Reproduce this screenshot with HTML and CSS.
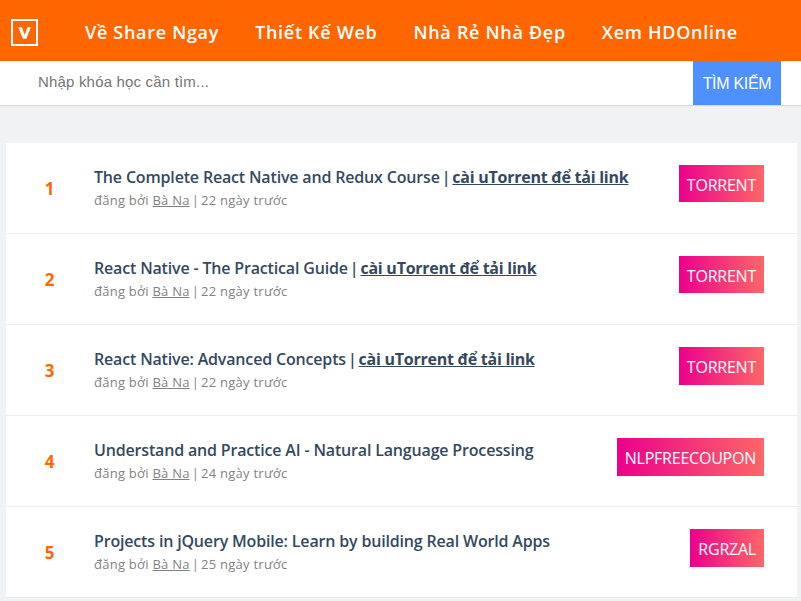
FILE: index.html
```
<!DOCTYPE html>
<html lang="vi">
<head>
    <meta charset="UTF-8">
    <meta name="viewport" content="width=device-width, initial-scale=1.0">
    <title>Share Ngay</title>
    <link rel="stylesheet" href="styles.css">
</head>
<body>
    <header class="header">
        <a class="logo" href="#">
            <svg width="27" height="27" viewBox="0 0 27 27">
                <rect x="1" y="1" width="25" height="25" fill="none" stroke="#fff" stroke-width="2"/>
                <path d="M7.2 8.3h3.6l2.9 7.6 2.7-7.6h3.5l-4.6 11.4h-3.4z" fill="#fff"/>
            </svg>
        </a>
        <nav class="nav">
            <a href="#">Về Share Ngay</a>
            <a href="#">Thiết Kế Web</a>
            <a href="#">Nhà Rẻ Nhà Đẹp</a>
            <a href="#">Xem HDOnline</a>
        </nav>
    </header>
    <form class="search">
        <input type="text" class="search-input" placeholder="Nhập khóa học cần tìm...">
        <button type="button" class="search-button">TÌM KIẾM</button>
    </form>
    <div class="list">
        <div class="item">
            <div class="rank">1</div>
            <div class="info">
                <div class="title">The Complete React Native and Redux Course<span class="bar">|</span><a href="#">cài uTorrent để tải link</a></div>
                <div class="meta">đăng bởi <a href="#">Bà Na</a><span class="bar">|</span>22 ngày trước</div>
            </div>
            <a class="tag" href="#">TORRENT</a>
        </div>
        <div class="item">
            <div class="rank">2</div>
            <div class="info">
                <div class="title">React Native - The Practical Guide<span class="bar">|</span><a href="#">cài uTorrent để tải link</a></div>
                <div class="meta">đăng bởi <a href="#">Bà Na</a><span class="bar">|</span>22 ngày trước</div>
            </div>
            <a class="tag" href="#">TORRENT</a>
        </div>
        <div class="item">
            <div class="rank">3</div>
            <div class="info">
                <div class="title">React Native: Advanced Concepts<span class="bar">|</span><a href="#">cài uTorrent để tải link</a></div>
                <div class="meta">đăng bởi <a href="#">Bà Na</a><span class="bar">|</span>22 ngày trước</div>
            </div>
            <a class="tag" href="#">TORRENT</a>
        </div>
        <div class="item">
            <div class="rank">4</div>
            <div class="info">
                <div class="title">Understand and Practice AI - Natural Language Processing</div>
                <div class="meta">đăng bởi <a href="#">Bà Na</a><span class="bar">|</span>24 ngày trước</div>
            </div>
            <a class="tag" href="#">NLPFREECOUPON</a>
        </div>
        <div class="item">
            <div class="rank">5</div>
            <div class="info">
                <div class="title">Projects in jQuery Mobile: Learn by building Real World Apps</div>
                <div class="meta">đăng bởi <a href="#">Bà Na</a><span class="bar">|</span>25 ngày trước</div>
            </div>
            <a class="tag" href="#">RGRZAL</a>
        </div>
    </div>
</body>
</html>
```
FILE: styles.css
```
* {
    box-sizing: border-box;
}
body {
    margin: 0;
    height: 601px;
    overflow: hidden;
    background: #f0f2f4;
    font-family: "Open Sans", "Noto Sans", sans-serif;
}
.header {
    display: flex;
    align-items: center;
    height: 61px;
    padding: 4px 11px 0;
    background: #f60;
}
.logo {
    display: block;
    height: 27px;
}
.nav {
    display: flex;
    gap: 36px;
    margin-left: 47px;
    padding-bottom: 2px;
}
.nav a {
    color: #fff;
    font-size: 18px;
    font-weight: 600;
    line-height: 24px;
    letter-spacing: 0.7px;
    white-space: nowrap;
    text-decoration: none;
}
.search {
    display: flex;
    height: 44px;
    margin: 0;
    padding-right: 20px;
    background: #fff;
    box-shadow: 0 1px 1px rgba(0, 0, 0, 0.1);
}
.search-input {
    flex: 1;
    padding: 0 0 3px 38px;
    border: none;
    outline: none;
    font-family: "Liberation Sans", sans-serif;
    font-size: 15px;
    letter-spacing: 0.18px;
}
.search-input::placeholder {
    color: #757575;
}
.search-button {
    width: 88px;
    padding: 1px 0 0;
    border: none;
    background: #4d90fe;
    color: #fff;
    font-family: "Liberation Sans", sans-serif;
    font-size: 16px;
    letter-spacing: -0.3px;
}
.list {
    margin: 38px 4px 0 6px;
    background: #fff;
}
.item {
    display: flex;
    align-items: flex-start;
    height: 91.07px;
    padding: 22px 33px 0 0;
    border-bottom: 1px solid #ededed;
}
.rank {
    width: 88px;
    margin-top: 12px;
    padding-right: 1px;
    color: #f60;
    font-size: 17px;
    font-weight: 700;
    line-height: 24px;
    text-align: center;
}
.info {
    flex: 1;
    white-space: nowrap;
}
.title {
    color: #34495e;
    font-size: 16px;
    font-weight: 600;
    line-height: 24px;
    letter-spacing: -0.17px;
}
.title a {
    color: #34495e;
    font-weight: 700;
    letter-spacing: -0.25px;
}
.bar {
    margin: 0 2px;
}
.meta {
    color: #828282;
    font-size: 13px;
    line-height: 22px;
    letter-spacing: 0.25px;
}
.meta a {
    color: #828282;
}
.tag {
    height: 37.42px;
    padding: 0 8px;
    background: linear-gradient(to right, #ec008c, #fc6767);
    color: #fff;
    font-size: 16px;
    line-height: 40.5px;
    letter-spacing: -0.23px;
    text-decoration: none;
}
```
